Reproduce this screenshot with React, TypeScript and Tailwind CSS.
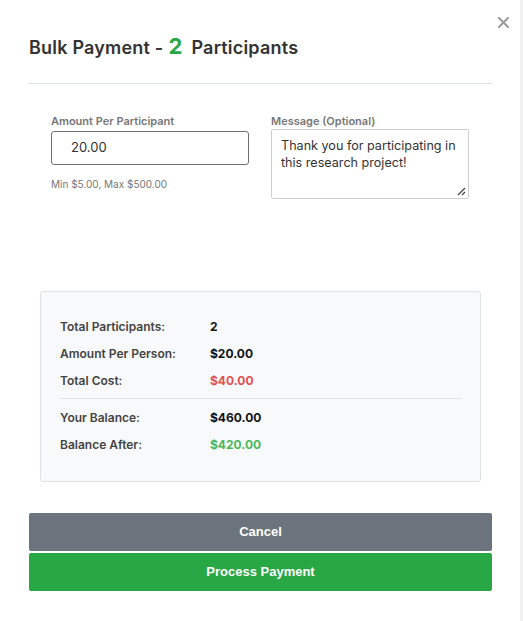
import React from "react";

export default function App() {
  const rows1 = [
    { l: "Total Participants:", v: "2", c: "text-[#111]" },
    { l: "Amount Per Person:", v: "$20.00", c: "text-[#111]" },
    { l: "Total Cost:", v: "$40.00", c: "text-[#e0524f]" },
  ];
  const rows2 = [
    { l: "Your Balance:", v: "$460.00", c: "text-[#111]" },
    { l: "Balance After:", v: "$420.00", c: "text-[#4cb75a]" },
  ];
  return (
    <div className="flex h-[621px] w-[523px] bg-white" style={{ fontFamily: "Inter, 'Noto Sans', sans-serif" }}>
      <div className="relative w-[520px] pl-[29px] pr-[28px]">
        <button className="absolute right-[11px] top-[15px] leading-none">
          <svg width="11" height="11" viewBox="0 0 11 11" className="mt-[2px]">
            <path d="M1 1L10 10M10 1L1 10" stroke="#9a9a9a" strokeWidth="2" strokeLinecap="round" />
          </svg>
        </button>
        <div className="pt-[32px] pb-[21px] flex items-baseline text-[#333] font-semibold text-[18px] leading-[28px] tracking-[0.2px]">
          <span>Bulk Payment -</span>
          <span className="text-[#28a745] text-[22px] font-bold ml-[5px] mr-[9px]">2</span>
          <span>Participants</span>
        </div>
        <div className="h-px bg-[#dee2e6]" />
        <div className="grid grid-cols-[198px_198px] gap-x-[22px] px-[22px] pt-[30px]">
          <div>
            <div className="text-[11px] leading-[14px] font-semibold text-[#777]">Amount Per Participant</div>
            <div className="mt-[3px] h-[34px] border border-[#707070] rounded-[3px] flex items-center pl-[19px] text-[13px] text-[#333]">
              20.00
            </div>
            <div className="mt-[12px] text-[10px] text-[#777]">Min $5.00, Max $500.00</div>
          </div>
          <div>
            <div className="text-[11px] leading-[14px] font-semibold text-[#777]">Message (Optional)</div>
            <div className="relative mt-[1px] h-[70px] border border-[#cfcfcf] rounded-[2px] pl-[9px] pr-[2px] pt-[7px] text-[12.6px] leading-[17px] text-[#333]">
              Thank you for participating in this research project!
              <svg className="absolute right-[2px] bottom-[2px]" width="10" height="10" viewBox="0 0 10 10">
                <path d="M2 9L9 2M6 9L9 6" stroke="#444" strokeWidth="1.3" />
              </svg>
            </div>
          </div>
        </div>
        <div className="mt-[92px] mx-[11px] bg-[#f8f9fa] border border-[#dee2e6] rounded-[3px] px-[19px] pt-[21px] pb-[23px] text-[12px] font-semibold">
          {rows1.map((r) => (
            <div key={r.l} className="flex h-[27px] items-center">
              <span className="w-[150px] text-[#444]">{r.l}</span>
              <span className={`font-bold ${r.c}`}>{r.v}</span>
            </div>
          ))}
          <div className="h-px bg-[#dee2e6] mt-[4px] mb-[5px]" />
          {rows2.map((r) => (
            <div key={r.l} className="flex h-[27px] items-center">
              <span className="w-[150px] text-[#444]">{r.l}</span>
              <span className={`font-bold ${r.c}`}>{r.v}</span>
            </div>
          ))}
        </div>
        <div className="mt-[31px] flex flex-col gap-[2px]" style={{ fontFamily: "'Liberation Sans', Arial, sans-serif" }}>
          <button className="h-[38px] w-full rounded-[2px] bg-[#6c757d] text-white text-[13px] font-bold">Cancel</button>
          <button className="h-[38px] w-full rounded-[2px] bg-[#28a745] text-white text-[13px] font-bold">Process Payment</button>
        </div>
      </div>
      <div className="w-[3px] bg-[#f0f0f0]" />
    </div>
  );
}
